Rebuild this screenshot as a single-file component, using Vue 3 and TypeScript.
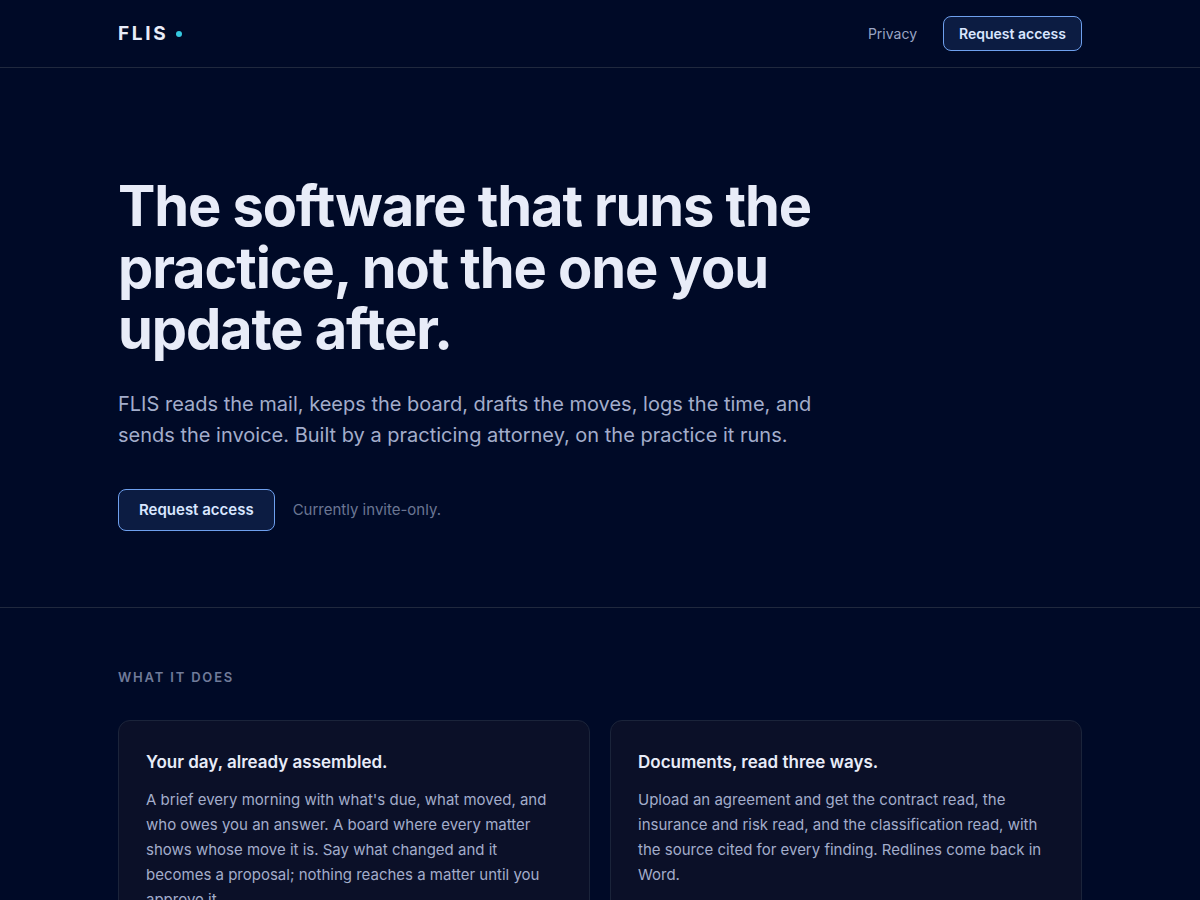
<script setup lang="ts">
interface Feature {
  title: string
  text: string
}

const features: Feature[] = [
  {
    title: 'Your day, already assembled.',
    text: "A brief every morning with what's due, what moved, and who owes you an answer. A board where every matter shows whose move it is. Say what changed and it becomes a proposal; nothing reaches a matter until you approve it.",
  },
  {
    title: 'Documents, read three ways.',
    text: 'Upload an agreement and get the contract read, the insurance and risk read, and the classification read, with the source cited for every finding. Redlines come back in Word.',
  },
]
</script>

<template>
  <div class="page">
    <header class="bar">
      <div class="wrap bar-inner">
        <a class="brand" href="#">FLIS<span class="dot"></span></a>
        <nav class="nav">
          <a class="nav-link" href="#privacy">Privacy</a>
          <a class="button button-small" href="#access">Request access</a>
        </nav>
      </div>
    </header>
    <main>
      <section class="hero">
        <div class="wrap">
          <h1>The software that runs the practice, not the one you update after.</h1>
          <p class="lead">
            FLIS reads the mail, keeps the board, drafts the moves, logs the time, and sends the
            invoice. Built by a practicing attorney, on the practice it runs.
          </p>
          <div class="actions">
            <a class="button" href="#access">Request access</a>
            <span class="note">Currently invite-only.</span>
          </div>
        </div>
      </section>
      <section class="features">
        <div class="wrap">
          <h2>What it does</h2>
          <div class="grid">
            <article v-for="feature in features" :key="feature.title" class="card">
              <h3>{{ feature.title }}</h3>
              <p>{{ feature.text }}</p>
            </article>
          </div>
        </div>
      </section>
    </main>
  </div>
</template>

<style>
body {
  margin: 0;
  background: #000a27;
}
</style>

<style scoped>
.page {
  min-height: 100vh;
  background: #000a27;
  color: #e8ecf8;
  font-family: Inter, "Liberation Sans", sans-serif;
  font-size: 16px;
}

.wrap {
  box-sizing: border-box;
  max-width: 1020px;
  margin: 0 auto;
  padding: 0 28px;
}

.bar {
  border-bottom: 1px solid #20293e;
}

.bar-inner {
  display: flex;
  align-items: center;
  justify-content: space-between;
  padding-top: 16px;
  padding-bottom: 16px;
}

.brand {
  display: flex;
  align-items: center;
  gap: 8px;
  color: #e8ecf8;
  font-size: 19px;
  font-weight: 700;
  line-height: 24px;
  letter-spacing: 0.14em;
  text-decoration: none;
}

.dot {
  width: 6px;
  height: 6px;
  border-radius: 50%;
  background: #35c9e0;
}

.nav {
  display: flex;
  align-items: center;
  gap: 26px;
}

.nav-link {
  color: #9aa5c4;
  font-size: 14px;
  line-height: 18px;
  text-decoration: none;
}

.button {
  padding: 10px 20px;
  border: 1px solid #6ea0ee;
  border-radius: 8px;
  background: #0c1c42;
  color: #d9e6ff;
  font-size: 15px;
  font-weight: 600;
  line-height: 20px;
  text-decoration: none;
}

.button-small {
  padding: 8px 15px;
  font-size: 14px;
  line-height: 17px;
}

.hero {
  padding: 108px 0 76px;
  border-bottom: 1px solid #20293e;
}

h1 {
  max-width: 760px;
  margin: 0 0 28px;
  font-size: 56px;
  font-weight: 700;
  line-height: 1.1;
  letter-spacing: -0.02em;
}

.lead {
  max-width: 720px;
  margin: 0 0 38px;
  color: #a3adcb;
  font-size: 20px;
  line-height: 31px;
}

.actions {
  display: flex;
  align-items: center;
  gap: 18px;
}

.note {
  color: #6b7693;
  font-size: 15px;
}

.features {
  padding: 60px 0;
}

h2 {
  margin: 0 0 34px;
  color: #707b9a;
  font-size: 13px;
  font-weight: 600;
  line-height: 18px;
  letter-spacing: 0.14em;
  text-transform: uppercase;
}

.grid {
  display: grid;
  grid-template-columns: repeat(2, 1fr);
  gap: 20px;
}

.card {
  padding: 27px;
  border: 1px solid #1b243a;
  border-radius: 12px;
  background: #0b1028;
}

h3 {
  margin: 0 0 10px;
  font-size: 17px;
  font-weight: 600;
  line-height: 29px;
}

.card p {
  margin: 0;
  color: #a3adcb;
  font-size: 15px;
  line-height: 25px;
}

@media (max-width: 760px) {
  .grid {
    grid-template-columns: 1fr;
  }

  h1 {
    font-size: 40px;
  }
}
</style>
